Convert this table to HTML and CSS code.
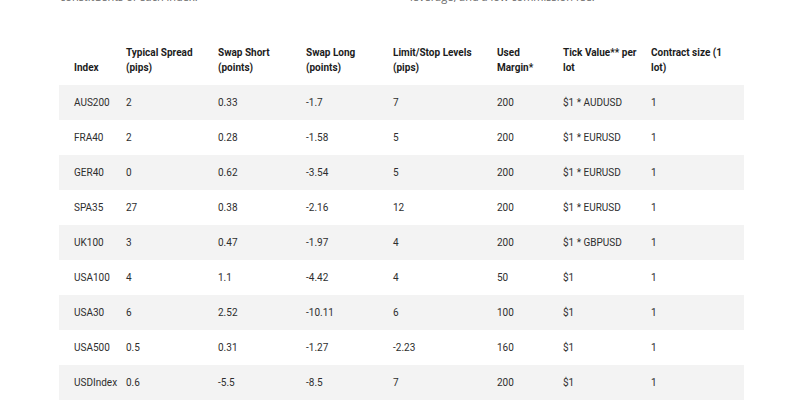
FILE: index.html
```html
<!DOCTYPE html>
<html>
<head>
<meta charset="utf-8">
<link rel="stylesheet" href="styles.css">
</head>
<body>
<div class="page">
  <div class="intro">
    <p>constituents of each index.</p>
    <p>leverage, and a low commission fee.</p>
  </div>
  <table class="specs">
    <colgroup>
      <col class="c1"><col class="c2"><col class="c3"><col class="c4"><col class="c5"><col class="c6"><col class="c7"><col class="c8">
    </colgroup>
    <thead>
      <tr>
        <th>Index</th>
        <th>Typical Spread<br>(pips)</th>
        <th>Swap Short<br>(points)</th>
        <th>Swap Long<br>(points)</th>
        <th>Limit/Stop Levels<br>(pips)</th>
        <th>Used<br>Margin*</th>
        <th>Tick Value** per<br>lot</th>
        <th>Contract size (1<br>lot)</th>
      </tr>
    </thead>
    <tbody>
      <tr><td>AUS200</td><td>2</td><td>0.33</td><td>-1.7</td><td>7</td><td>200</td><td>$1 * AUDUSD</td><td>1</td></tr>
      <tr><td>FRA40</td><td>2</td><td>0.28</td><td>-1.58</td><td>5</td><td>200</td><td>$1 * EURUSD</td><td>1</td></tr>
      <tr><td>GER40</td><td>0</td><td>0.62</td><td>-3.54</td><td>5</td><td>200</td><td>$1 * EURUSD</td><td>1</td></tr>
      <tr><td>SPA35</td><td>27</td><td>0.38</td><td>-2.16</td><td>12</td><td>200</td><td>$1 * EURUSD</td><td>1</td></tr>
      <tr><td>UK100</td><td>3</td><td>0.47</td><td>-1.97</td><td>4</td><td>200</td><td>$1 * GBPUSD</td><td>1</td></tr>
      <tr><td>USA100</td><td>4</td><td>1.1</td><td>-4.42</td><td>4</td><td>50</td><td>$1</td><td>1</td></tr>
      <tr><td>USA30</td><td>6</td><td>2.52</td><td>-10.11</td><td>6</td><td>100</td><td>$1</td><td>1</td></tr>
      <tr><td>USA500</td><td>0.5</td><td>0.31</td><td>-1.27</td><td>-2.23</td><td>160</td><td>$1</td><td>1</td></tr>
      <tr><td>USDIndex</td><td>0.6</td><td>-5.5</td><td>-8.5</td><td>7</td><td>200</td><td>$1</td><td>1</td></tr>
      <tr><td>&nbsp;</td><td></td><td></td><td></td><td></td><td></td><td></td><td></td></tr>
    </tbody>
  </table>
</div>
</body>
</html>
```
FILE: styles.css
```css
html, body {
  margin: 0;
  padding: 0;
  background: #ffffff;
  overflow: hidden;
}
.page {
  width: 685px;
  margin: 0 0 0 59px;
}
.intro {
  display: grid;
  grid-template-columns: 1fr 1fr;
  column-gap: 16px;
  padding-left: 1px;
  margin-top: -11px;
}
.intro p {
  margin: 0;
  font-family: "Open Sans", sans-serif;
  font-size: 11px;
  line-height: 16px;
  color: #666666;
}
.specs {
  margin-top: 30px;
  width: 685px;
  table-layout: fixed;
  border-collapse: collapse;
  font-family: Roboto, "Liberation Sans", sans-serif;
  font-size: 10px;
}
.c1 { width: 67px; }
.c2 { width: 92px; }
.c3 { width: 88px; }
.c4 { width: 87px; }
.c5 { width: 104px; }
.c6 { width: 66px; }
.c7 { width: 88px; }
.c8 { width: 93px; }
.specs th, .specs td {
  padding: 0 6px 0 0;
  text-align: left;
  white-space: nowrap;
}
.specs th:first-child, .specs td:first-child {
  padding-left: 15px;
}
.specs th {
  height: 50px;
  box-sizing: border-box;
  padding-bottom: 10px;
  vertical-align: bottom;
  font-weight: 700;
  line-height: 15px;
  color: #1c1c1c;
}
.specs td {
  height: 35px;
  color: #2e2e2e;
  line-height: 14px;
  vertical-align: middle;
}
.specs tbody tr:nth-child(odd) {
  background: #f3f3f3;
}
```
